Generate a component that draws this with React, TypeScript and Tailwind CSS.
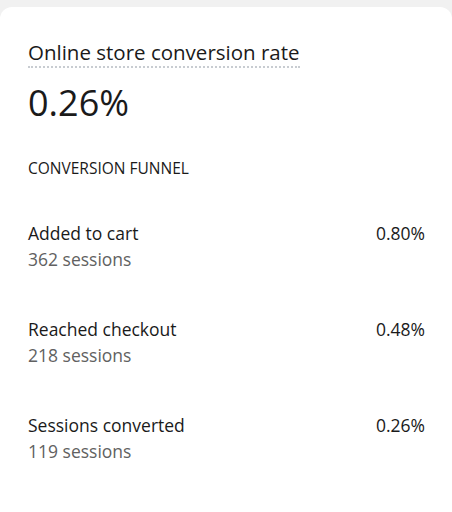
const rows = [
  { label: "Added to cart", sessions: "362 sessions", rate: "0.80%" },
  { label: "Reached checkout", sessions: "218 sessions", rate: "0.48%" },
  { label: "Sessions converted", sessions: "119 sessions", rate: "0.26%" },
];

export default function App() {
  return (
    <div
      className="h-[512px] w-[452px] overflow-hidden bg-[#f1f1f1] pt-[7px]"
      style={{ fontFamily: '"Open Sans", "Noto Sans", sans-serif' }}
    >
      <div className="h-[520px] rounded-xl bg-white pl-[28px] pr-[27px] pt-[31px] text-[#1a1a1a]">
        <h2 className="inline-block border-b-2 border-dotted border-[#c8ccd1] text-[20.5px] leading-[28px] font-medium">
          Online store conversion rate
        </h2>
        <div className="mt-[13px] text-[36px] leading-[44px]">0.26%</div>
        <div className="mt-[33px] text-[15.5px] leading-[20px] font-medium">CONVERSION FUNNEL</div>
        <div className="mt-[42px] flex flex-col gap-[44px]">
          {rows.map((r) => (
            <div key={r.label} className="flex items-start justify-between">
              <div>
                <div className="text-[17.5px] leading-[26px]">{r.label}</div>
                <div className="text-[17.5px] leading-[26px] text-[#616161]">{r.sessions}</div>
              </div>
              <div className="text-[17.5px] leading-[26px]">{r.rate}</div>
            </div>
          ))}
        </div>
      </div>
    </div>
  );
}
